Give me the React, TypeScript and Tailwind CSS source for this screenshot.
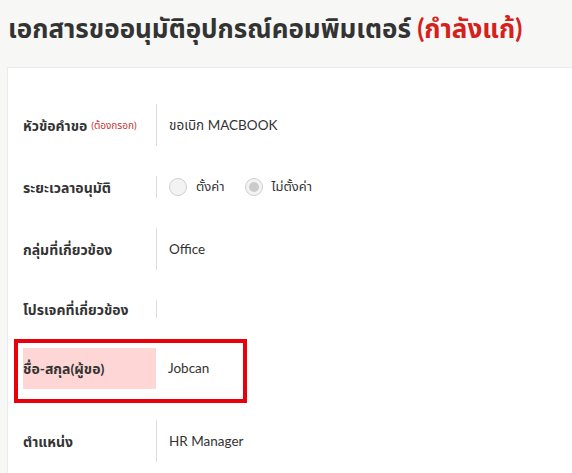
import React from "react";

const font = { fontFamily: 'Lato, "Noto Sans", "Noto Sans Thai", Tahoma, sans-serif' };

function Row({
  label,
  extra,
  children,
  valueH,
  className = "",
  highlight = false,
}: {
  label: string;
  extra?: string;
  children?: React.ReactNode;
  valueH: string;
  className?: string;
  highlight?: boolean;
}) {
  return (
    <div className={`relative flex items-center ${className}`}>
      <div
        className={`flex h-full w-[133px] items-center text-[14px] font-bold text-[#333] ${
          highlight ? "bg-[#fdd6d5]" : ""
        }`}
      >
        <span>{label}</span>
        {extra && <span className="ml-1 text-[10px] font-normal text-[#c9302c]">{extra}</span>}
      </div>
      <div
        className={`flex items-center pl-3 text-[13.5px] text-[#333] ${valueH} ${
          highlight ? "" : "border-l border-[#dcdcdc]"
        }`}
      >
        {children}
      </div>
      {highlight && (
        <div className="pointer-events-none absolute left-[-9px] top-[-9px] h-[64px] w-[233px] border-4 border-[#e8000b]" />
      )}
    </div>
  );
}

function Radio({ checked }: { checked?: boolean }) {
  return (
    <span className="flex h-[18px] w-[18px] items-center justify-center rounded-full border border-[#cfcfcf] bg-[#f3f3f3]">
      {checked && <span className="h-[10px] w-[10px] rounded-full bg-[#cbcbcb]" />}
    </span>
  );
}

export default function App() {
  return (
    <div className="h-[473px] w-[572px] overflow-hidden bg-[#f7f7f5]" style={font}>
      <h1 className="pl-2 pt-[12px] text-[26px] font-bold leading-[32px] text-[#333]">
        เอกสารขออนุมัติอุปกรณ์คอมพิมเตอร์ <span className="text-[#d4211b]">(กำลังแก้)</span>
      </h1>
      <div className="ml-[7px] mt-[23px] h-[500px] border-l border-t border-[#ebebe9] bg-white pl-[15px] pt-[36px]">
        <Row label="หัวข้อคำขอ" extra="(ต้องกรอก)" valueH="h-[42px]" className="h-[42px]">
          ขอเบิก MACBOOK
        </Row>
        <Row label="ระยะเวลาอนุมัติ" valueH="h-[22px]" className="mt-[20px] h-[42px]">
          <div className="flex items-center text-[13px]">
            <Radio />
            <span className="ml-[9px]">ตั้งค่า</span>
            <span className="ml-[20px]" />
            <Radio checked />
            <span className="ml-[9px]">ไม่ตั้งค่า</span>
          </div>
        </Row>
        <Row label="กลุ่มที่เกี่ยวข้อง" valueH="h-[42px]" className="mt-[20px] h-[42px]">
          Office
        </Row>
        <Row label="โปรเจคที่เกี่ยวข้อง" valueH="h-[18px]" className="mt-[18px] h-[42px]" />
        <Row label="ชื่อ-สกุล(ผู้ขอ)" valueH="h-[41px]" className="mt-[18px] h-[41px]" highlight>
          Jobcan
        </Row>
        <Row label="ตำแหน่ง" valueH="h-[42px]" className="mt-[31px] h-[42px]">
          HR Manager
        </Row>
      </div>
    </div>
  );
}
